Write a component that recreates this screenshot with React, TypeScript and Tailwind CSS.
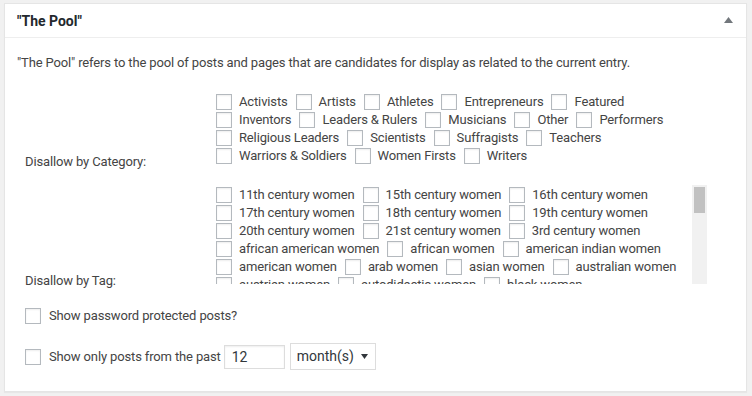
import React from "react";

const categories = [
  "Activists",
  "Artists",
  "Athletes",
  "Entrepreneurs",
  "Featured",
  "Inventors",
  "Leaders & Rulers",
  "Musicians",
  "Other",
  "Performers",
  "Religious Leaders",
  "Scientists",
  "Suffragists",
  "Teachers",
  "Warriors & Soldiers",
  "Women Firsts",
  "Writers",
];

const tags = [
  "11th century women",
  "15th century women",
  "16th century women",
  "17th century women",
  "18th century women",
  "19th century women",
  "20th century women",
  "21st century women",
  "3rd century women",
  "african american women",
  "african women",
  "american indian women",
  "american women",
  "arab women",
  "asian women",
  "australian women",
  "austrian women",
  "autodidactic women",
  "black women",
  "british women",
  "canadian women",
  "chinese women",
];

function Box() {
  return (
    <span className="block w-4 h-4 shrink-0 border border-[#b4b9be] bg-white shadow-[inset_0_1px_2px_rgba(0,0,0,0.07)]" />
  );
}

function Item({ label }: { label: string }) {
  return (
    <label className="flex items-center gap-[7px] h-[18px] whitespace-nowrap">
      <Box />
      <span>{label}</span>
    </label>
  );
}

export default function App() {
  return (
    <div
      className="w-[752px] h-[396px] bg-[#f1f1f1] pt-[3px] px-[4px] text-[13px] tracking-[-0.14px] text-[#444]"
      style={{ fontFamily: "Roboto, 'Liberation Sans', sans-serif" }}
    >
      <div className="w-[743px] border border-[#e5e5e5] bg-white shadow-[0_1px_1px_rgba(0,0,0,0.04)]">
        <div className="h-[34px] flex items-center justify-between pl-[12px] pr-[13px] border-b border-[#eee]">
          <h2 className="text-[14px] font-bold text-[#23282d] leading-none tracking-normal">"The Pool"</h2>
          <svg width="9" height="6" viewBox="0 0 9 6" className="mt-[-1px]">
            <path d="M4.5 0 L9 6 L0 6 Z" fill="#72777c" />
          </svg>
        </div>
        <div className="px-[12px] pt-[15px] pb-[21px]">
          <p className="leading-[20px]">
            "The Pool" refers to the pool of posts and pages that are candidates for display as related to the current entry.
          </p>

          <div className="flex items-end mt-[20px]">
            <div className="w-[199px] pl-[8px] leading-[20px]">Disallow by Category:</div>
            <div className="w-[472px] pb-[7px] flex flex-wrap gap-x-[8px] leading-[18px]">
              {categories.map((c) => (
                <Item key={c} label={c} />
              ))}
            </div>
          </div>

          <div className="flex items-end mt-[13px]">
            <div className="w-[199px] pl-[8px] leading-[20px]">Disallow by Tag:</div>
            <div className="pb-[7px]">
              <div className="flex h-[99px] w-[491px]">
                <div className="flex-1 overflow-hidden pt-[1px]">
                  <div className="flex flex-wrap gap-x-[8px] leading-[18px]">
                    {tags.map((t) => (
                      <Item key={t} label={t} />
                    ))}
                  </div>
                </div>
                <div className="w-[15px] bg-[#f1f1f1] pt-[2px] px-[2px]">
                  <div className="h-[26px] bg-[#c1c1c1]" />
                </div>
              </div>
            </div>
          </div>

          <div className="flex items-center gap-[8px] h-[20px] mt-[15px] pl-[8px]">
            <Box />
            <span>Show password protected posts?</span>
          </div>

          <div className="flex items-center h-[27px] mt-[17px] pl-[8px]">
            <Box />
            <span className="ml-[8px]">Show only posts from the past</span>
            <input
              type="text"
              defaultValue="12"
              className="ml-[3px] w-[61px] h-[24px] border border-[#ddd] px-[7px] text-[14px] tracking-normal text-[#32373c] shadow-[inset_0_1px_2px_rgba(0,0,0,0.07)] outline-none"
            />
            <div className="ml-[5px] w-[86px] h-[27px] border border-[#ddd] flex items-center justify-between pl-[6px] pr-[7px] text-[14px] tracking-normal text-[#32373c]">
              <span>month(s)</span>
              <svg width="7" height="5" viewBox="0 0 7 5">
                <path d="M0 0 L7 0 L3.5 5 Z" fill="#32373c" />
              </svg>
            </div>
          </div>
        </div>
      </div>
    </div>
  );
}
